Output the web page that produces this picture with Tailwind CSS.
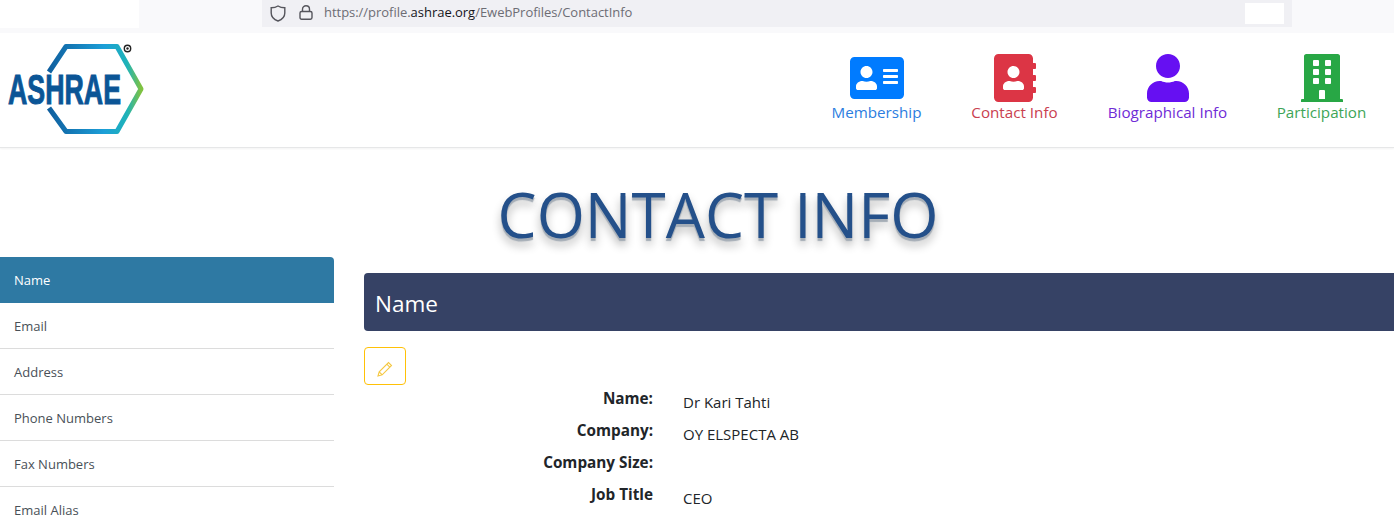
<!DOCTYPE html>
<html lang="en">
<head>
    <meta charset="UTF-8">
    <meta name="viewport" content="width=device-width, initial-scale=1.0">
    <title>Contact Info</title>
    <script src="https://cdn.jsdelivr.net/npm/@tailwindcss/browser@4"></script>
</head>
<body class="bg-white h-[521px] overflow-hidden font-['Open_Sans',sans-serif] text-[#212529]">
    <!-- browser bar -->
    <div class="flex h-[33px] bg-[#f9f9fb]">
        <div class="w-[139px] h-[28px] bg-white"></div>
        <div class="ml-[123px] w-[1030px] h-[27px] bg-[#f0f0f4] flex items-center relative">
            <svg class="ml-[8px] w-[16px] h-[17px]" viewBox="0 0 16 17" fill="none" stroke="#55555c" stroke-width="1.4"><path d="M8 1 C10 2.3 12.5 2.8 14.8 2.8 V8 C14.8 11.8 12 14.6 8 16 C4 14.6 1.2 11.8 1.2 8 V2.8 C3.5 2.8 6 2.3 8 1 Z"/></svg>
            <svg class="ml-[13px] mb-[2px] w-[14px] h-[15px]" viewBox="0 0 14 15" fill="none" stroke="#55555c" stroke-width="1.4"><path d="M3.5 6.5 V4.2 C3.5 2.2 5 .8 7 .8 C9 .8 10.5 2.2 10.5 4.2 V6.5"/><rect x="1" y="6.5" width="12" height="7.7" rx="1.6"/></svg>
            <div class="ml-[11px] pb-[2px] text-[13px] tracking-[-0.03px] text-[#6d6d74]">https://profile.<span class="text-[#15141a]">ashrae.org</span>/EwebProfiles/ContactInfo</div>
            <div class="absolute left-[983px] top-[3px] w-[39px] h-[21px] bg-white"></div>
        </div>
    </div>

    <!-- header -->
    <header class="h-[115px] flex items-start justify-between border-b border-[#e6e7e8] shadow-[0_1px_2px_rgba(0,0,0,0.05)] bg-white">
        <svg class="mt-[8px] ml-[6px] w-[140px] h-[96px] overflow-visible" viewBox="0 0 140 96">
            <defs>
                <linearGradient id="hex" x1="0" y1="0" x2="1" y2="0">
                    <stop offset="0" stop-color="#0f5f9f"/>
                    <stop offset="0.6" stop-color="#1c9fd8"/>
                    <stop offset="0.85" stop-color="#1fb3b8"/>
                    <stop offset="1" stop-color="#7fc241"/>
                </linearGradient>
            </defs>
            <path d="M43 31 L60 5.5 H111 L135 48 L111 90.5 H60 L43 67" fill="none" stroke="url(#hex)" stroke-width="5" stroke-linejoin="round"/>
            <text x="2" y="63" textLength="113" lengthAdjust="spacingAndGlyphs" font-family="Liberation Sans" font-weight="700" font-size="42" fill="#0b5596" stroke="#0b5596" stroke-width="1">ASHRAE</text>
            <circle cx="121.500" cy="7.500" r="3.200" fill="none" stroke="#222" stroke-width="1.400"/>
            <circle cx="121.500" cy="7.500" r="1.200" fill="#222"/>
        </svg>
        <nav class="flex pr-[3px] pt-[21px] text-[15.2px] leading-[24px]">
            <a class="w-[139px] flex flex-col items-center text-[#2b7de0]">
                <svg class="w-[54px] h-[48px]" viewBox="0 0 576 512" fill="#007bff"><path d="M528 32H48C21.5 32 0 53.5 0 80v352c0 26.5 21.5 48 48 48h480c26.5 0 48-21.5 48-48V80c0-26.500-21.500-48-48-48zm-352 96c35.300 0 64 28.700 64 64s-28.700 64-64 64-64-28.700-64-64 28.700-64 64-64zm112 236.800c0 10.600-10 19.200-22.400 19.200H86.400C74 384 64 375.400 64 364.800v-19.200c0-31.800 30.100-57.600 67.200-57.600h5c12.300 5.100 25.700 8 39.800 8s27.600-2.900 39.800-8h5c37.100 0 67.200 25.800 67.200 57.600v19.200zM512 312c0 4.400-3.600 8-8 8H360c-4.400 0-8-3.600-8-8v-16c0-4.400 3.600-8 8-8h144c4.400 0 8 3.600 8 8v16zm0-64c0 4.400-3.600 8-8 8H360c-4.400 0-8-3.600-8-8v-16c0-4.400 3.600-8 8-8h144c4.400 0 8 3.600 8 8v16zm0-64c0 4.400-3.600 8-8 8H360c-4.400 0-8-3.600-8-8v-16c0-4.400 3.600-8 8-8h144c4.400 0 8 3.600 8 8v16z"/></svg>
                <span class="mt-[-2px]">Membership</span>
            </a>
            <a class="w-[137px] flex flex-col items-center text-[#c9404f]">
                <svg class="w-[42px] h-[48px]" viewBox="0 0 448 512" fill="#dc3545"><path d="M436 160c6.600 0 12-5.400 12-12v-40c0-6.600-5.400-12-12-12h-20V48c0-26.500-21.500-48-48-48H48C21.500 0 0 21.500 0 48v416c0 26.500 21.500 48 48 48h320c26.500 0 48-21.500 48-48v-48h20c6.600 0 12-5.400 12-12v-40c0-6.600-5.400-12-12-12h-20v-64h20c6.600 0 12-5.400 12-12v-40c0-6.600-5.400-12-12-12h-20v-64h20zm-228-32c35.300 0 64 28.700 64 64s-28.700 64-64 64-64-28.700-64-64 28.700-64 64-64zm112 236.800c0 10.600-10 19.200-22.400 19.200H118.400C106 384 96 375.400 96 364.800v-19.200c0-31.800 30.100-57.600 67.200-57.600h5c12.300 5.100 25.700 8 39.800 8s27.600-2.900 39.800-8h5c37.100 0 67.200 25.800 67.200 57.600v19.200z"/></svg>
                <span class="mt-[-2px]">Contact Info</span>
            </a>
            <a class="w-[169px] flex flex-col items-center text-[#6f2bd6]">
                <svg class="w-[48px] h-[48px]" viewBox="0 0 448 512" fill="#6610f2"><path d="M224 256c70.700 0 128-57.300 128-128S294.700 0 224 0 96 57.300 96 128s57.300 128 128 128zm89.600 32h-16.700c-22.200 10.200-46.900 16-72.900 16s-50.600-5.800-72.900-16h-16.700C60.200 288 0 348.200 0 422.400V464c0 26.500 21.500 48 48 48h352c26.500 0 48-21.500 48-48v-41.600c0-74.200-60.200-134.400-134.400-134.400z"/></svg>
                <span class="mt-[-2px]">Biographical Info</span>
            </a>
            <a class="w-[139px] flex flex-col items-center text-[#3da557]">
                <svg class="w-[42px] h-[48px]" viewBox="0 0 448 512" fill="#28a745"><path d="M436 480h-20V24c0-13.300-10.700-24-24-24H56C42.700 0 32 10.700 32 24v456H12c-6.600 0-12 5.400-12 12v20h448v-20c0-6.600-5.400-12-12-12zM128 76c0-6.600 5.400-12 12-12h40c6.600 0 12 5.400 12 12v40c0 6.600-5.400 12-12 12h-40c-6.600 0-12-5.400-12-12V76zm0 96c0-6.600 5.400-12 12-12h40c6.600 0 12 5.400 12 12v40c0 6.600-5.400 12-12 12h-40c-6.600 0-12-5.400-12-12v-40zm52 148h-40c-6.600 0-12-5.400-12-12v-40c0-6.600 5.400-12 12-12h40c6.600 0 12 5.400 12 12v40c0 6.600-5.400 12-12 12zm76 160h-64v-84c0-6.600 5.400-12 12-12h40c6.600 0 12 5.400 12 12v84zm64-172c0 6.600-5.400 12-12 12h-40c-6.600 0-12-5.400-12-12v-40c0-6.600 5.400-12 12-12h40c6.600 0 12 5.400 12 12v40zm0-96c0 6.600-5.400 12-12 12h-40c-6.600 0-12-5.400-12-12v-40c0-6.600 5.400-12 12-12h40c6.600 0 12 5.400 12 12v40zm0-96c0 6.600-5.400 12-12 12h-40c-6.600 0-12-5.400-12-12V76c0-6.600 5.400-12 12-12h40c6.600 0 12 5.400 12 12v40z"/></svg>
                <span class="mt-[-2px]">Participation</span>
            </a>
        </nav>
    </header>

    <!-- page title -->
    <div class="h-[109px] pt-[24px] pl-[42px] text-center">
        <h1 class="text-[62px] leading-[84px] text-[#24508a] [text-shadow:0_3px_1px_#a5adb6,0_7px_10px_rgba(0,0,0,0.3)]">CONTACT INFO</h1>
    </div>

    <div class="flex">
        <!-- side menu -->
        <ul class="w-[334px] shrink-0 text-[13px] text-[#495057]">
            <li class="h-[46px] flex items-center pl-[14px] pt-[2px] bg-[#2e79a3] text-white rounded-tr">Name</li>
            <li class="h-[46px] flex items-center pl-[14px] pt-[2px] border-b border-[#dcdcdc]">Email</li>
            <li class="h-[46px] flex items-center pl-[14px] pt-[2px] border-b border-[#dcdcdc]">Address</li>
            <li class="h-[46px] flex items-center pl-[14px] pt-[2px] border-b border-[#dcdcdc]">Phone Numbers</li>
            <li class="h-[46px] flex items-center pl-[14px] pt-[2px] border-b border-[#dcdcdc]">Fax Numbers</li>
            <li class="h-[46px] flex items-center pl-[14px] pt-[2px] border-b border-[#dcdcdc]">Email Alias</li>
        </ul>

        <!-- content -->
        <main class="ml-[30px] pt-[16px] flex-1">
            <div class="h-[58px] flex items-center pl-[11px] pt-[3px] bg-[#364265] text-white text-[22.5px] rounded-l">Name</div>
            <button class="mt-[16px] w-[42px] h-[38px] flex items-center justify-center border border-[#ffc107] rounded">
                <svg class="mt-[5px] w-[16px] h-[16px]" viewBox="0 0 16 16" fill="none" stroke="#f5c842" stroke-width="1.1"><path d="M1 15 L2.200 10.800 L11.500 1.500 L14.500 4.500 L5.200 13.800 Z M2.200 10.800 L5.200 13.800 M9.800 3.200 L12.800 6.200"/></svg>
            </button>
            <dl class="grid grid-cols-[289px_1fr] gap-x-[30px] auto-rows-[32px] mt-[2px] text-[15.3px]">
                <dt class="font-bold text-right">Name:</dt>
                <dd class="pt-[4px] text-[15px]">Dr Kari Tahti</dd>
                <dt class="font-bold text-right">Company:</dt>
                <dd class="pt-[4px] text-[15px]">OY ELSPECTA AB</dd>
                <dt class="font-bold text-right">Company Size:</dt>
                <dd class="pt-[4px] text-[15px]"></dd>
                <dt class="font-bold text-right">Job Title</dt>
                <dd class="pt-[4px] text-[15px]">CEO</dd>
                <dt class="font-bold text-right pt-[3px]">Region:</dt>
                <dd class="pt-[4px] text-[15px]"></dd>
            </dl>
        </main>
    </div>
</body>
</html>
